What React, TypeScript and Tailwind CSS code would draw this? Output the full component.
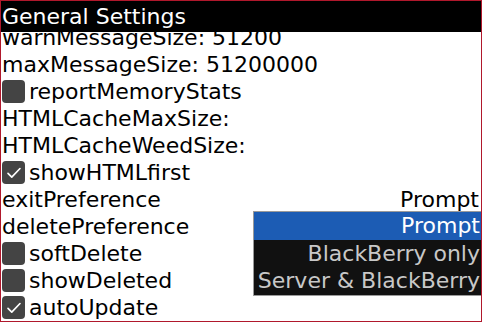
import { useState } from "react"

type Row =
  | { kind: "text"; label: string; value?: string }
  | { kind: "check"; label: string; checked: boolean }

const rows: Row[] = [
  { kind: "text", label: "warnMessageSize: 51200" },
  { kind: "text", label: "maxMessageSize: 51200000" },
  { kind: "check", label: "reportMemoryStats", checked: false },
  { kind: "text", label: "HTMLCacheMaxSize:" },
  { kind: "text", label: "HTMLCacheWeedSize:" },
  { kind: "check", label: "showHTMLfirst", checked: true },
  { kind: "text", label: "exitPreference", value: "Prompt" },
  { kind: "text", label: "deletePreference" },
  { kind: "check", label: "softDelete", checked: false },
  { kind: "check", label: "showDeleted", checked: false },
  { kind: "check", label: "autoUpdate", checked: true },
]

const options = ["Prompt", "BlackBerry only", "Server & BlackBerry"]

function Checkbox({ checked }: { checked: boolean }) {
  return (
    <div className="mr-[4px] flex h-[23px] w-[23px] shrink-0 items-center justify-center rounded-[4px] bg-[#444444]">
      {checked && (
        <svg viewBox="0 0 24 24" className="h-[18px] w-[18px]" fill="none">
          <path
            d="M4 12.5l5 5L20 6"
            stroke="white"
            strokeWidth="2.2"
            strokeLinecap="round"
            strokeLinejoin="round"
          />
        </svg>
      )}
    </div>
  )
}

export default function App() {
  const [selected] = useState(0)

  return (
    <div
      className="relative flex h-[322px] w-[482px] flex-col overflow-hidden border border-[#b0182c] bg-white text-[22px] leading-[27px] text-black"
      style={{ fontFamily: '"DejaVu Sans", sans-serif' }}
    >
      <div className="h-[31px] shrink-0 bg-black pl-[1px] leading-[31px] text-white">
        General Settings
      </div>
      {/* list is scrolled a few pixels, first row clipped under the title */}
      <div className="min-h-0 flex-1 overflow-hidden">
        <div className="mt-[-8px] flex flex-col">
          {rows.map((row) => (
            <div key={row.label} className="flex h-[27px] items-center pl-[1px] pr-[2px]">
              {row.kind === "check" && <Checkbox checked={row.checked} />}
              <span className="whitespace-nowrap">{row.label}</span>
              {row.kind === "text" && row.value && (
                <span className="ml-auto">{row.value}</span>
              )}
            </div>
          ))}
        </div>
      </div>

      <div className="absolute left-[252px] top-[210px] w-[229px] border border-[#9a9a9a] bg-[#111111]">
        {options.map((opt, i) => (
          <div
            key={opt}
            className={`h-[27.5px] whitespace-nowrap pr-[1px] text-right leading-[27px] ${
              i === selected ? "bg-[#1c5cb4] text-white" : "text-[#c8c8c8]"
            }`}
          >
            {opt}
          </div>
        ))}
      </div>
    </div>
  )
}
